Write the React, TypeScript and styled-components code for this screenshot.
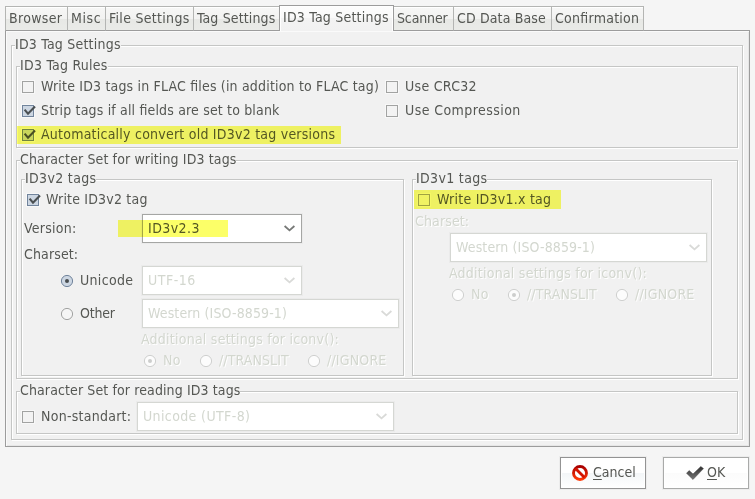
import React from "react";
import styled, { createGlobalStyle, css } from "styled-components";

const GlobalStyle = createGlobalStyle`
  * { box-sizing: border-box; }
  body {
    margin: 0;
    background: #f5f5f5;
    color: #555753;
    font-family: "DejaVu Sans Condensed", "DejaVu Sans", sans-serif;
    font-stretch: condensed;
    font-size: 14px;
    line-height: 16px;
    white-space: nowrap;
  }
`;

const Dialog = styled.main`
  width: 755px;
  height: 499px;
  padding: 5px 5px 0;
  display: flex;
  flex-direction: column;
  overflow: hidden;
`;

const TabBar = styled.nav`
  display: flex;
  align-items: flex-end;
  height: 26px;
  flex: none;
  background: linear-gradient(#9c9c9c, #9c9c9c) bottom / 100% 1px no-repeat;
`;

const Tab = styled.div<{ $width: number; $active?: boolean; $joined?: boolean }>`
  width: ${(p) => p.$width}px;
  height: 25px;
  padding: 3px 0 0 3px;
  border: 0 solid #b4b5b3;
  border-top-width: 1px;
  border-left-width: ${(p) => (p.$joined ? 0 : 1)}px;
  border-bottom: 1px solid #9c9c9c;
  background: linear-gradient(#f7f7f6 0, #f2f2f1 12px, #e7e8e5 12px, #eaebe8 100%);
  box-shadow: inset 0 1px #fff;
  &:last-child { border-right-width: 1px; }
  ${(p) =>
    p.$active &&
    css`
      height: 26px;
      border: 1px solid #9c9c9c;
      border-bottom: 0;
      background: linear-gradient(#fdfdfd 0, #f9f9f9 12px, #f3f3f3 12px, #f1f1f1 100%);
      box-shadow: inset 1px 1px #fff, inset -1px 0 #fff;
    `}
`;

const Page = styled.div`
  width: 745px;
  height: 416px;
  flex: none;
  padding: 14px 6px 6px 5px;
  border: 1px solid #9c9c9c;
  border-top: 0;
  padding-left: 5px;
  background: #f1f1f1;
  box-shadow: inset 1px 1px #fafafa, inset -1px -1px #e6e6e6;
`;

const Group = styled.section<{ $width?: number; $height: number; $top?: number }>`
  width: ${(p) => (p.$width ? `${p.$width}px` : "auto")};
  height: ${(p) => p.$height}px;
  margin-top: ${(p) => p.$top ?? 0}px;
  padding: 0 4px;
  border: 1px solid #c5c6c5;
  box-shadow: 1px 1px #fff, inset 1px 1px #fff;
`;

const LegendBox = styled.h2`
  width: fit-content;
  height: 16px;
  margin: -10px 0 0 -1px;
  font: inherit;
  background: #f1f1f1;
`;

const Columns = styled.div`
  display: flex;
  gap: 8px;
  margin-top: 12px;
`;

const Rules = styled.div`
  display: grid;
  grid-template-columns: 364px auto;
  grid-auto-rows: 24px;
  margin-top: 2px;
  padding-left: 1px;
`;

const Row = styled.div<{ $height: number; $indent?: number; $top?: number; $dim?: boolean }>`
  display: flex;
  align-items: center;
  height: ${(p) => p.$height}px;
  margin-top: ${(p) => p.$top ?? 0}px;
  padding-left: ${(p) => p.$indent ?? 0}px;
  ${(p) => p.$dim && "color: #d3d7cf; text-shadow: 1px 1px #fff;"}
`;

const Caption = styled.span<{ $width?: number; $lift?: number }>`
  width: ${(p) => (p.$width ? `${p.$width}px` : "auto")};
  margin: 0 2px ${(p) => p.$lift ?? 2}px -2px;
  flex: none;
`;

const OptionBox = styled.label<{ $width?: number }>`
  display: flex;
  align-items: center;
  height: 24px;
  gap: 7px;
  flex: none;
  width: ${(p) => (p.$width ? `${p.$width}px` : "auto")};
`;

const OptionText = styled.span`
  margin-bottom: 2px;
`;

const Marker = styled.div<{ $x: number; $y: number; $width: number; $height: number }>`
  position: relative;
  display: flex;
  align-items: center;
  &::after {
    content: "";
    position: absolute;
    left: ${(p) => p.$x}px;
    top: ${(p) => p.$y}px;
    width: ${(p) => p.$width}px;
    height: ${(p) => p.$height}px;
    background: #fcff68;
    mix-blend-mode: multiply;
    pointer-events: none;
  }
`;

const Tracked = styled.span<{ $space: number }>`
  letter-spacing: ${(p) => p.$space}px;
  font-feature-settings: "liga" 1;
`;

const Glyph = styled.svg`
  display: block;
  flex: none;
  overflow: visible;
`;

const Combo = styled.div<{ $width: number; $dim?: boolean }>`
  display: flex;
  align-items: center;
  justify-content: space-between;
  width: ${(p) => p.$width}px;
  height: 29px;
  flex: none;
  padding: 0 6px 1px 5px;
  border: 1px solid ${(p) => (p.$dim ? "#d5d7d3" : "#a5a6a4")};
  background: #fff;
  color: ${(p) => (p.$dim ? "#d3d7cf" : "#555753")};
  box-shadow: 0 0 0 1px #ebebeb;
`;

const Actions = styled.footer`
  display: flex;
  gap: 17px;
  margin: 10px 1px 0 0;
  justify-content: flex-end;
`;

const Button = styled.button<{ $strong?: boolean; $gap: number; $inset: number }>`
  display: flex;
  align-items: center;
  gap: ${(p) => p.$gap}px;
  width: 86px;
  height: 32px;
  padding: 0 0 0 ${(p) => p.$inset}px;
  border: 1px solid ${(p) => (p.$strong ? "#939393" : "#a9aaa9")};
  background: ${(p) =>
    p.$strong
      ? "linear-gradient(#fff 15px, #f3f6f8 15px, #fff 100%)"
      : "linear-gradient(#fff 15px, #fbfbfb 15px, #fff 100%)"};
  box-shadow: 0 0 0 1px #ececec, inset 0 0 0 1px #fff;
  color: inherit;
  font: inherit;
`;

const Mnemonic = styled.span`
  text-decoration: underline;
  text-underline-offset: 2px;
  text-decoration-thickness: 1px;
`;

const spacing: Record<string, number> = {
  Browser: 0.33,
  Misc: 0.6,
  "File Settings": 0.3,
  "Tag Settings": 0.14,
  "ID3 Tag Settings": 0.22,
  Scanner: -0.13,
  "CD Data Base": 0.14,
  Confirmation: 0.26,
  "ID3 Tag Rules": 0.24,
  "Write ID3 tags in FLAC files (in addition to FLAC tag)": 0.18,
  "Use CRC32": 0.3,
  "Strip tags if all fields are set to blank": 0.165,
  "Use Compression": 0.43,
  "Automatically convert old ID3v2 tag versions": 0.23,
  "Character Set for writing ID3 tags": 0.125,
  "ID3v2 tags": 0.33,
  "ID3v1 tags": 0.33,
  "Write ID3v2 tag": 0.19,
  "Write ID3v1.x tag": 0.24,
  "Version:": 0.26,
  "Charset:": 0.13,
  Unicode: 0.33,
  Other: -0.2,
  "ID3v2.3": 0.43,
  "UTF-16": 0.5,
  "Western (ISO-8859-1)": 0.125,
  "Additional settings for iconv():": 0.24,
  No: 0.3,
  "//TRANSLIT": 0.1,
  "//IGNORE": 0.18,
  "Character Set for reading ID3 tags": 0.113,
  "Non-standart:": 0.26,
  "Unicode (UTF-8)": 0.38,
};

function Text({ children }: { children: string }) {
  return <Tracked $space={spacing[children] ?? 0}>{children}</Tracked>;
}

function Legend({ children }: { children: string }) {
  return <LegendBox><Text>{children}</Text></LegendBox>;
}

function Check({ on }: { on?: boolean }) {
  return (
    <Glyph width="12" height="12" viewBox="0 0 12 12">
      <rect x="-.5" y="-.5" width="13" height="13" fill="none" stroke="#f8f8f8" />
      <rect x=".5" y=".5" width="11" height="11" fill={on ? "#ccd6e2" : "#f3f3f3"} stroke={on ? "#71849c" : "#a2a3a2"} />
      {on && <path d="M2.6 4.6 6 8.7 13 1.4" fill="none" stroke="#4b5052" strokeWidth="2.1" />}
    </Glyph>
  );
}

function Radio({ on, dim }: { on?: boolean; dim?: boolean }) {
  const edge = dim ? "#cfd0cf" : on ? "#71849c" : "#a2a3a2";
  const fill = dim ? "#fcfcfc" : on ? "#ccd6e2" : "#f5f5f5";
  return (
    <Glyph width="12" height="12" viewBox="0 0 12 12">
      <circle cx="6" cy="6" r="5.6" fill={fill} stroke={edge} />
      {on && <circle cx="6" cy="6" r="2" fill={dim ? "#cdcecd" : "#484d50"} />}
    </Glyph>
  );
}

type OptionProps = { children: string; on?: boolean; radio?: boolean; dim?: boolean; width?: number };

function Option({ children, on, radio, dim, width }: OptionProps) {
  return (
    <OptionBox $width={width}>
      {radio ? <Radio on={on} dim={dim} /> : <Check on={on} />}
      <OptionText><Text>{children}</Text></OptionText>
    </OptionBox>
  );
}

function Select({ text, width, dim }: { text: string; width: number; dim?: boolean }) {
  return (
    <Combo $width={width} $dim={dim}>
      <Text>{text}</Text>
      <Glyph width="11" height="7" viewBox="0 0 11 7">
        <path d="M.6 1 5.5 5.4 10.4 1" fill="none" stroke={dim ? "#d9dad8" : "#777977"} strokeWidth="1.8" />
      </Glyph>
    </Combo>
  );
}

function IconvOptions({ selected }: { selected: number }) {
  const widths = [56, 108, 90];
  return (
    <>
      {["No", "//TRANSLIT", "//IGNORE"].map((name, i) => (
        <Option key={name} width={widths[i]} radio dim on={i === selected}>{name}</Option>
      ))}
    </>
  );
}

const tabs: [string, number][] = [
  ["Browser", 62],
  ["Misc", 38],
  ["File Settings", 88],
  ["Tag Settings", 86],
  ["ID3 Tag Settings", 115],
  ["Scanner", 59],
  ["CD Data Base", 98],
  ["Confirmation", 93],
];
const activeTab = 4;

export default function App() {
  return (
    <>
      <GlobalStyle />
      <Dialog>
        <TabBar>
          {tabs.map(([name, width], i) => (
            <Tab key={name} $width={width} $active={i === activeTab} $joined={i === activeTab + 1}>
              <Text>{name}</Text>
            </Tab>
          ))}
        </TabBar>
        <Page>
          <Group $height={395}>
            <Legend>ID3 Tag Settings</Legend>
            <Group $height={82} $top={14}>
              <Legend>ID3 Tag Rules</Legend>
              <Rules>
                <Option>Write ID3 tags in FLAC files (in addition to FLAC tag)</Option>
                <Option>Use CRC32</Option>
                <Option on>Strip tags if all fields are set to blank</Option>
                <Option>Use Compression</Option>
                <Marker $x={-5} $y={3} $width={324} $height={18}>
                  <Option on>Automatically convert old ID3v2 tag versions</Option>
                </Marker>
              </Rules>
            </Group>
            <Group $height={219} $top={12}>
              <Legend>Character Set for writing ID3 tags</Legend>
              <Columns>
                <Group $width={383} $height={197}>
                  <Legend>ID3v2 tags</Legend>
                  <Row $height={24} $top={2} $indent={1}>
                    <Option on>Write ID3v2 tag</Option>
                  </Row>
                  <Marker $x={92} $y={8} $width={110} $height={17}>
                    <Row $height={29} $top={2}>
                      <Caption $width={116}><Text>Version:</Text></Caption>
                      <Select text="ID3v2.3" width={160} />
                    </Row>
                  </Marker>
                  <Row $height={23}><Caption><Text>Charset:</Text></Caption></Row>
                  <Row $height={29} $indent={35}>
                    <Option width={81} radio on>Unicode</Option>
                    <Select text="UTF-16" width={160} dim />
                  </Row>
                  <Row $height={29} $top={4} $indent={35}>
                    <Option width={81} radio>Other</Option>
                    <Select text="Western (ISO-8859-1)" width={257} dim />
                  </Row>
                  <Row $height={22} $indent={115} $dim><Text>Additional settings for iconv():</Text></Row>
                  <Row $height={22} $indent={118} $dim><IconvOptions selected={0} /></Row>
                </Group>
                <Group $width={300} $height={197}>
                  <Legend>ID3v1 tags</Legend>
                  <Row $height={24} $top={2} $indent={1}>
                    <Marker $x={-4} $y={2} $width={147} $height={19}>
                      <Option>Write ID3v1.x tag</Option>
                    </Marker>
                  </Row>
                  <Row $height={21} $dim><Caption $lift={4}><Text>Charset:</Text></Caption></Row>
                  <Row $height={29} $indent={33}>
                    <Select text="Western (ISO-8859-1)" width={257} dim />
                  </Row>
                  <Row $height={22} $indent={32} $dim><Text>Additional settings for iconv():</Text></Row>
                  <Row $height={22} $indent={35} $dim><IconvOptions selected={1} /></Row>
                </Group>
              </Columns>
            </Group>
            <Group $height={43} $top={12}>
              <Legend>Character Set for reading ID3 tags</Legend>
              <Row $height={29} $top={4} $indent={1}>
                <Option width={115}>Non-standart:</Option>
                <Select text="Unicode (UTF-8)" width={257} dim />
              </Row>
            </Group>
          </Group>
        </Page>
        <Actions>
          <Button $strong $gap={5} $inset={11}>
            <Glyph width="16" height="16" viewBox="0 0 16 16">
              <defs>
                <linearGradient id="stop" x2="0" y2="1">
                  <stop stopColor="#a80000" />
                  <stop offset="1" stopColor="#ff3a08" />
                </linearGradient>
              </defs>
              <circle cx="8" cy="8" r="6.5" fill="#fff" stroke="url(#stop)" strokeWidth="2.9" />
              <path d="m3.5 3.5 9 9" stroke="#d41400" strokeWidth="2.8" />
            </Glyph>
            <OptionText><Mnemonic>C</Mnemonic>ancel</OptionText>
          </Button>
          <Button $gap={3} $inset={22}>
            <Glyph width="18" height="14" viewBox="0 0 18 14">
              <defs>
                <linearGradient id="tick" x2="0" y2="1">
                  <stop stopColor="#2f2f2f" />
                  <stop offset="1" stopColor="#777" />
                </linearGradient>
              </defs>
              <path d="M.5 7.2 3.2 4.6 7 8 14.8.5 17.5 2.6 7 13.5Z" fill="url(#tick)" stroke="#444" strokeWidth=".5" />
            </Glyph>
            <OptionText><Mnemonic>O</Mnemonic>K</OptionText>
          </Button>
        </Actions>
      </Dialog>
    </>
  );
}
